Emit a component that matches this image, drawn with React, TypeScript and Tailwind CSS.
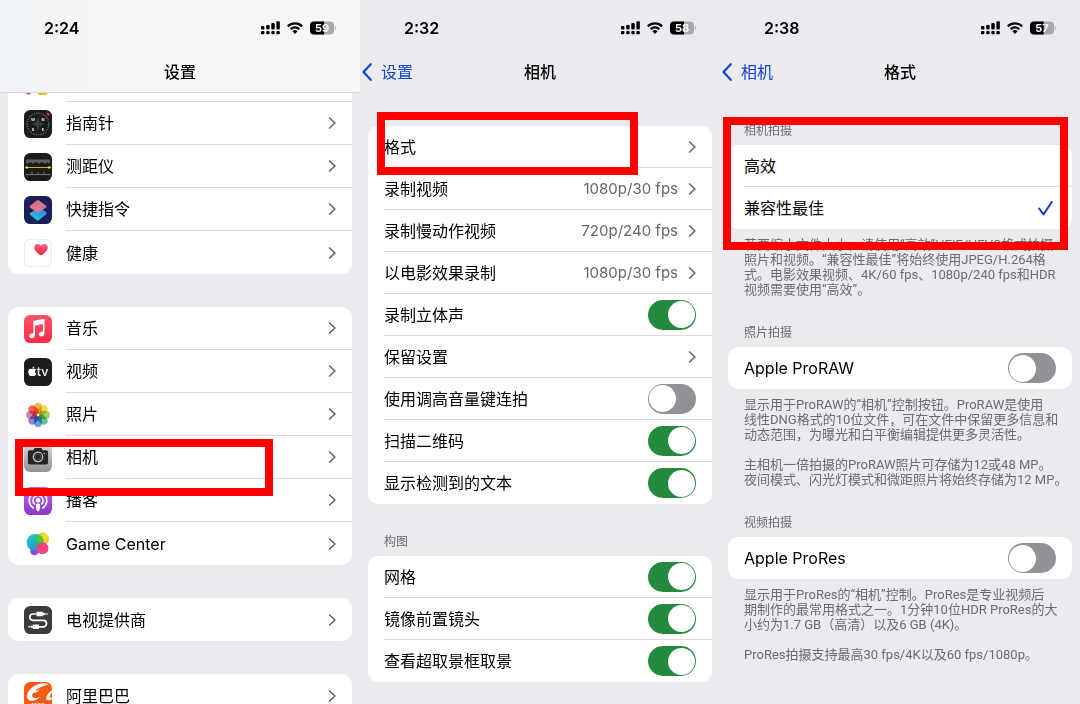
import { useId, useState } from 'react'
import type { ReactNode } from 'react'
import { FaApple } from 'react-icons/fa'

function StatusBar({ time, battery }: { time: string; battery: number }) {
  const level = 24 * (battery / 100)
  return (
    <div className="flex h-[55px] items-center justify-between pl-11 pr-6">
      <span className="leading-5 font-semibold">{time}</span>
      <div className="flex items-center gap-[7px]">
        <svg width="19" height="14" viewBox="0 0 19 14" aria-label="信号">
          <rect x="0" y="5" width="3.4" height="3.6" rx="1" />
          <rect x="5.2" y="4" width="3.4" height="4.6" rx="1" />
          <rect x="10.3" y="2" width="3.4" height="6.6" rx="1" />
          <rect x="15.4" y="0.3" width="3.4" height="8.3" rx="1" />
          <rect x="0" y="10" width="3.4" height="3.2" rx="1" />
          <rect x="5.2" y="10" width="3.4" height="3.2" rx="1" />
          <rect x="10.3" y="10" width="3.4" height="3.2" rx="1" />
          <rect x="15.4" y="10" width="3.4" height="3.2" rx="1" />
        </svg>
        <svg width="16" height="12" viewBox="0 0 16 12" aria-label="Wi-Fi">
          <g fill="none" stroke="currentColor" strokeWidth="2.2">
            <path d="M.8 4.400a10.200 10.200 0 0 1 14.400 0" />
            <path d="M3.600 7.300a6.200 6.200 0 0 1 8.800 0" />
          </g>
          <path d="M8 12 5.400 9.300a3.700 3.700 0 0 1 5.200 0z" />
        </svg>
        <svg width="26" height="14" viewBox="0 0 26 14" aria-label={`电量 ${battery}%`}>
          <defs>
            <clipPath id={`battery-${battery}`}>
              <rect x="0" y="0.5" width="24" height="13" rx="4" />
            </clipPath>
          </defs>
          <g clipPath={`url(#battery-${battery})`}>
            <rect width="24" height="14" fill="#a9a9ad" />
            <rect width={level} height="14" />
          </g>
          <path d="M24.800 5v4.200c.8-.3 1.100-1.100 1.100-2.100s-.3-1.800-1.100-2.100z" fill="#a9a9ad" />
          <text x="12" y="11" textAnchor="middle" fontSize="11" fontWeight="700" fill="#fff">
            {battery}
          </text>
        </svg>
      </div>
    </div>
  )
}

function NavBar({ title, back }: { title: string; back?: string }) {
  return (
    <div className="grid h-[34px] grid-cols-[1fr_auto_1fr] items-center">
      {back ? (
        <a href="#back" className="flex items-center gap-[9px] pl-0.5 text-[#1545d2]">
          <svg width="10" height="18" viewBox="0 0 10 18" aria-hidden="true">
            <path
              d="M8.800 1.200 1.500 9l7.300 7.800"
              fill="none"
              stroke="currentColor"
              strokeWidth="2.200"
              strokeLinecap="round"
              strokeLinejoin="round"
            />
          </svg>
          <span>{back}</span>
        </a>
      ) : (
        <span />
      )}
      <h1 className="font-medium">{title}</h1>
      <span />
    </div>
  )
}

function Chevron() {
  return (
    <svg width="8" height="12" viewBox="0 0 8 12" className="shrink-0 text-[#67676c]" aria-hidden="true">
      <path
        d="M1.600 1 6.900 6 1.600 11"
        fill="none"
        stroke="currentColor"
        strokeWidth="1.700"
        strokeLinecap="round"
        strokeLinejoin="round"
      />
    </svg>
  )
}

const Highlight = ({ className }: { className: string }) => (
  <div className={`pointer-events-none absolute z-10 border-8 border-[#fe0000] ${className}`} />
)

const Card = ({ children }: { children: ReactNode }) => (
  <ul className="rounded-[10px] bg-white">{children}</ul>
)

interface AppRowProps {
  icon: ReactNode
  label: string
  last?: boolean
  marked?: boolean
}

function AppRow({ icon, label, last, marked }: AppRowProps) {
  return (
    <li className="relative">
      <button type="button" className="flex h-[43px] w-full items-center gap-[14px] pl-4 text-left">
        {icon}
        <span
          className={`flex h-full flex-1 items-center justify-between pr-4 ${last ? '' : 'border-b border-[#dedee1]'}`}
        >
          {label}
          <Chevron />
        </span>
      </button>
      {marked && <Highlight className="top-[3px] left-[7px] h-[57px] w-[258px]" />}
    </li>
  )
}

function IconTile({ fill, children }: { fill: string; children: ReactNode }) {
  return (
    <svg width="28" height="28" viewBox="0 0 28 28" className="shrink-0" aria-hidden="true">
      <rect width="28" height="28" rx="6.300" fill={fill} />
      {children}
    </svg>
  )
}

const CompassIcon = () => (
  <IconTile fill="#1b1b1d">
    <circle cx="14" cy="14" r="10.800" fill="none" stroke="#9b9b9d" strokeWidth="1.600" strokeDasharray=".5 1.300" />
    <path d="M14 8.500v11M8.500 14h11" stroke="#777" strokeWidth=".6" />
    <circle cx="14" cy="14" r="2.800" fill="none" stroke="#555" strokeWidth=".6" />
    <path d="m22 2.800 3.400.3-1 3.300z" fill="#f33b30" />
    <g fill="#e8e8e8" fontSize="4" fontWeight="700" textAnchor="middle">
      <text x="9" y="10.500">W</text>
      <text x="19" y="10.500">N</text>
      <text x="9" y="21">S</text>
      <text x="19" y="21">E</text>
    </g>
  </IconTile>
)

const MeasureIcon = () => (
  <IconTile fill="#1b1b1d">
    <path
      d="M3 6.500v4M5 6.500v3M7 6.500v3M9 6.500v4M11 6.500v3M13 6.500v3M15 6.500v4M17 6.500v3M19 6.500v3M21 6.500v4M23 6.500v3M25 6.500v3.500"
      stroke="#c8c8c8"
      strokeWidth=".8"
    />
    <path d="M1 14.500h26" stroke="#d7b02c" strokeWidth="1" />
    <circle cx="2.800" cy="14.500" r="1.300" fill="#f7cf3b" />
    <circle cx="25.200" cy="14.500" r="1.300" fill="#f7cf3b" />
    <path d="M8 21v-2.500M14 21v-2M20 21v-2.500M1.500 21.600h25" stroke="#a0a0a0" strokeWidth=".7" />
  </IconTile>
)

const ShortcutsIcon = () => (
  <IconTile fill="#1a2057">
    <defs>
      <linearGradient id="sc-low" x1="0" y1="1" x2="1" y2="0">
        <stop offset="0" stopColor="#22d3d5" />
        <stop offset="1" stopColor="#2d72f0" />
      </linearGradient>
      <linearGradient id="sc-top" x1="0" y1="0" x2="1" y2="1">
        <stop offset="0" stopColor="#f7657b" />
        <stop offset=".5" stopColor="#e97d8e" />
        <stop offset="1" stopColor="#a57bd2" />
      </linearGradient>
    </defs>
    <path
      d="m15 11.300 7 4.800c1 .7 1 1.600 0 2.300l-7 5.500c-.9.700-1.600.7-2.500 0l-6-4.800c-1-.8-1-1.600 0-2.300z"
      fill="url(#sc-low)"
    />
    <path
      d="M12.700 4.400c.9-.7 1.600-.7 2.500 0l6.600 5c1 .8 1 1.600 0 2.400l-6.600 4.700c-.9.700-1.600.7-2.500 0l-6.400-4.700c-1-.8-1-1.600 0-2.400z"
      fill="url(#sc-top)"
      opacity=".93"
    />
  </IconTile>
)

const HealthIcon = () => (
  <IconTile fill="#e0e0e2">
    <defs>
      <linearGradient id="health" x1="0" y1="0" x2="0" y2="1">
        <stop offset="0" stopColor="#fb5c87" />
        <stop offset="1" stopColor="#f9243f" />
      </linearGradient>
    </defs>
    <rect x=".6" y=".6" width="26.800" height="26.800" rx="5.800" fill="#fff" />
    <path
      d="M17 16.600c-3.500-2.300-6.800-5-6.800-8.100 0-2 1.500-3.600 3.400-3.600 1.500 0 2.700.8 3.400 2.100.7-1.300 1.900-2.100 3.400-2.100 1.900 0 3.400 1.600 3.400 3.600 0 3.100-3.300 5.800-6.800 8.100z"
      fill="url(#health)"
    />
  </IconTile>
)

const MusicIcon = () => (
  <IconTile fill="url(#music)">
    <defs>
      <linearGradient id="music" x1="0" y1="0" x2="0" y2="1">
        <stop offset="0" stopColor="#fb5468" />
        <stop offset="1" stopColor="#f82d46" />
      </linearGradient>
    </defs>
    <path
      d="M20.500 4.700v13.200c0 2.200-1.300 3.400-3.200 3.400-1.400 0-2.500-.8-2.500-2.100 0-1.500 1.200-2.200 2.700-2.500 1-.2 1.400-.4 1.400-1.300V9.100l-7.900 1.700v9c0 2.200-1.300 3.400-3.200 3.400-1.400 0-2.500-.8-2.500-2.100 0-1.500 1.200-2.200 2.700-2.500 1-.2 1.400-.4 1.400-1.300V6.800c0-.6.300-.9.900-1.100l9.300-2c.6-.1.900.2.900 1z"
      fill="#fff"
    />
  </IconTile>
)

const TvIcon = () => (
  <IconTile fill="#1d1d1f">
    <FaApple x="2.800" y="7.800" size="11" color="#fff" />
    <text x="12.800" y="18" fontSize="12.500" fontWeight="500" fill="#fff">
      tv
    </text>
  </IconTile>
)

const petals = ['#f9a533', '#ecd23b', '#9bcb56', '#52b98d', '#5196dd', '#8a70c6', '#d273a9', '#ef5148']

const PhotosIcon = () => (
  <IconTile fill="#fff">
    {petals.map((color, i) => (
      <rect
        key={color}
        x="10.100"
        y="2.100"
        width="7.800"
        height="10.800"
        rx="3.900"
        fill={color}
        opacity=".9"
        className="mix-blend-multiply"
        transform={`rotate(${i * 45} 14 14)`}
      />
    ))}
  </IconTile>
)

const CameraIcon = () => (
  <IconTile fill="url(#camera)">
    <defs>
      <linearGradient id="camera" x1="0" y1="0" x2="0" y2="1">
        <stop offset="0" stopColor="#d8d8da" />
        <stop offset="1" stopColor="#919196" />
      </linearGradient>
    </defs>
    <path
      d="M9.800 5.300c.4-.8.900-1.200 1.800-1.200h4.800c.9 0 1.400.4 1.800 1.200l.5.900h3.400c1.200 0 2 .8 2 2v10.200c0 1.200-.8 2-2 2H5.900c-1.200 0-2-.8-2-2V8.200c0-1.200.8-2 2-2h3.400z"
      fill="#252528"
    />
    <circle cx="14" cy="12.900" r="4.700" fill="none" stroke="#c9c9cb" strokeWidth="1.200" />
    <circle cx="14" cy="12.900" r="2.900" fill="none" stroke="#66666a" strokeWidth=".6" />
    <circle cx="20.300" cy="9.500" r=".8" fill="#e7b735" />
  </IconTile>
)

const PodcastIcon = () => (
  <IconTile fill="url(#podcast)">
    <defs>
      <linearGradient id="podcast" x1="0" y1="0" x2="0" y2="1">
        <stop offset="0" stopColor="#c664e8" />
        <stop offset="1" stopColor="#8836c9" />
      </linearGradient>
    </defs>
    <g fill="none" stroke="#fff" strokeWidth="1.600" strokeLinecap="round">
      <path d="M9.300 21a8.800 8.800 0 1 1 9.400 0" />
      <path d="M10.300 17a5 5 0 1 1 7.400 0" />
    </g>
    <circle cx="14" cy="13.300" r="2.300" fill="#fff" />
    <path
      d="M11.800 18.400c0-1.200.8-1.800 2.200-1.800s2.200.6 2.200 1.800c0 1.500-.4 3.400-.7 4.600-.2.800-.7 1.200-1.500 1.200s-1.300-.4-1.500-1.200c-.3-1.200-.7-3.100-.7-4.600z"
      fill="#fff"
    />
  </IconTile>
)

const GameCenterIcon = () => (
  <IconTile fill="#fff">
    <defs>
      <linearGradient id="gc-main" x1="0" y1="0" x2="1" y2="1">
        <stop offset="0" stopColor="#2cc7ee" />
        <stop offset=".5" stopColor="#20b5a8" />
        <stop offset="1" stopColor="#39be5b" />
      </linearGradient>
      <linearGradient id="gc-blue" x1="0" y1="0" x2="0" y2="1">
        <stop offset=".3" stopColor="#23a8ef" stopOpacity="0" />
        <stop offset="1" stopColor="#297ef4" />
      </linearGradient>
      <linearGradient id="gc-yellow" x1="0" y1="0" x2="1" y2="1">
        <stop offset="0" stopColor="#8bd637" />
        <stop offset=".5" stopColor="#f9df26" />
        <stop offset="1" stopColor="#fcae2b" />
      </linearGradient>
    </defs>
    <circle cx="10.500" cy="21" r="4.300" fill="#8a43ee" />
    <circle cx="18.800" cy="8.800" r="6.200" fill="url(#gc-yellow)" />
    <circle cx="11.300" cy="12.300" r="8.600" fill="url(#gc-main)" />
    <circle cx="11.300" cy="12.300" r="8.600" fill="url(#gc-blue)" opacity=".7" />
    <path d="M13.500 4.300a8.600 8.600 0 0 1 6.200 10A6.200 6.200 0 0 1 13.500 4.300z" fill="#4cc63b" />
    <circle cx="18.500" cy="18.300" r="6" fill="#fb3a78" opacity=".95" />
  </IconTile>
)

const ProviderIcon = () => (
  <IconTile fill="#3b3b3d">
    <path
      d="M12.500 8H9a3.200 3.200 0 0 0 0 6.400h10.300a3.200 3.200 0 0 1 0 6.400H15"
      fill="none"
      stroke="#fff"
      strokeWidth="1.700"
    />
    <path d="M12.500 5.700h6.300v4.600h-6.300zM8.700 18.500h6.300v4.600H8.700z" fill="#fff" />
    <path d="M18.800 6.700h2v2.600h-2zM6.700 19.500h2v2.600h-2z" fill="#fff" />
    <path d="M20.800 8h3.200M4 20.800h2.700" stroke="#fff" strokeWidth="1.100" />
  </IconTile>
)

const AlibabaIcon = () => (
  <IconTile fill="#f95a12">
    <path
      d="M17 1.500C9.500 2.500 2.400 9.500 3 15c.5 4.300 5.200 4.900 11 1.700l2.500-1.800c-3.800 1.600-7.600 1.700-8.200-.6-.3-1.200.2-2.400 1-3.500 2.700.3 5.300-1.200 6-3.300-1.400 1-2.900 1.400-4.200 1.400 2.500-3 7-4.900 13.500-6.700-2.300-.9-5.100-1-7.600-.7z"
      fill="#fff"
    />
    <path d="M28 8.300c-3.100 2-5.900 5.600-5.900 8 0 2.100 2.300 2.500 5.900 1.300v-2.100c-1.300.5-2.300.5-2.300-.5 0-1.200 1-3.100 2.300-4.400z" fill="#fff" />
    <text x="14" y="25.500" textAnchor="middle" fontSize="5.500" fontWeight="800" fill="#fff">
      1688
    </text>
  </IconTile>
)

function SettingsScreen() {
  return (
    <section>
      <header className="border-b border-[#d6d6da] bg-linear-to-r from-[#eff3f5] via-[#f6f6f7] via-25% to-[#f6f6f7] pb-[3px]">
        <StatusBar time="2:24" battery={59} />
        <NavBar title="设置" />
      </header>
      <div className="flex flex-col gap-[33px] px-2">
        <ul className="rounded-b-[10px] bg-white">
          <li className="flex h-[9px] items-start gap-[14px] overflow-hidden pl-4">
            <svg width="28" height="2" viewBox="0 0 28 2" aria-hidden="true">
              <path d="M2 0h5l-1 1.500H3z" fill="#b758a8" />
              <path d="M13 0h11l-2 2h-7z" fill="#f4c02c" />
            </svg>
            <span className="h-full flex-1 border-b border-[#dedee1]" />
          </li>
          <AppRow icon={<CompassIcon />} label="指南针" />
          <AppRow icon={<MeasureIcon />} label="测距仪" />
          <AppRow icon={<ShortcutsIcon />} label="快捷指令" />
          <AppRow icon={<HealthIcon />} label="健康" last />
        </ul>
        <Card>
          <AppRow icon={<MusicIcon />} label="音乐" />
          <AppRow icon={<TvIcon />} label="视频" />
          <AppRow icon={<PhotosIcon />} label="照片" />
          <AppRow icon={<CameraIcon />} label="相机" marked />
          <AppRow icon={<PodcastIcon />} label="播客" />
          <AppRow icon={<GameCenterIcon />} label="Game Center" last />
        </Card>
        <Card>
          <AppRow icon={<ProviderIcon />} label="电视提供商" last />
        </Card>
        <Card>
          <AppRow icon={<AlibabaIcon />} label="阿里巴巴" last />
        </Card>
      </div>
    </section>
  )
}

interface RowProps {
  label: string
  last?: boolean
  marked?: boolean
}

const rowClass = (last?: boolean) =>
  `flex h-[42px] items-center pr-4 ${last ? '' : 'border-b border-[#dedee1]'}`

function LinkRow({ label, value, last, marked }: RowProps & { value?: string }) {
  return (
    <li className="relative pl-4">
      <button type="button" className={`w-full gap-[10px] text-left ${rowClass(last)}`}>
        <span className="flex-1">{label}</span>
        {value && <span className="text-[15px] text-[#66666b]">{value}</span>}
        <Chevron />
      </button>
      {marked && <Highlight className="-top-[14px] left-[9px] h-[63px] w-[261px]" />}
    </li>
  )
}

function ToggleRow({ label, last, on = false }: RowProps & { on?: boolean }) {
  const id = useId()
  const [checked, setChecked] = useState(on)
  return (
    <li className="pl-4">
      <div className={rowClass(last)}>
        <label htmlFor={id} className="flex-1">
          {label}
        </label>
        <input
          id={id}
          type="checkbox"
          role="switch"
          checked={checked}
          onChange={(e) => setChecked(e.target.checked)}
          className="flex h-[30px] w-12 shrink-0 appearance-none items-center rounded-full bg-[#919198] px-px before:size-[27px] before:rounded-full before:bg-white checked:justify-end checked:bg-[#248a3d]"
        />
      </div>
    </li>
  )
}

const SectionLabel = ({ children }: { children: string }) => (
  <h2 className="px-4 pt-7 pb-1.5 text-[12px] leading-4 text-[#6b6b70]">{children}</h2>
)

function Footnote({ paragraphs }: { paragraphs: string[][] }) {
  return (
    <div className="flex flex-col gap-[15px] pt-2 pl-4 font-[Roboto,'Noto_Sans_CJK_SC',sans-serif] text-[13px] leading-[15px] whitespace-nowrap text-[#6b6b70]">
      {paragraphs.map((lines) => (
        <p key={lines[0]}>
          {lines.map((line) => (
            <span key={line} className="block">
              {line}
            </span>
          ))}
        </p>
      ))}
    </div>
  )
}

function CameraScreen() {
  return (
    <section>
      <header className="pb-1">
        <StatusBar time="2:32" battery={58} />
        <NavBar title="相机" back="设置" />
      </header>
      <div className="px-2 pt-[33px]">
        <Card>
          <LinkRow label="格式" marked />
          <LinkRow label="录制视频" value="1080p/30 fps" />
          <LinkRow label="录制慢动作视频" value="720p/240 fps" />
          <LinkRow label="以电影效果录制" value="1080p/30 fps" />
          <ToggleRow label="录制立体声" on />
          <LinkRow label="保留设置" />
          <ToggleRow label="使用调高音量键连拍" />
          <ToggleRow label="扫描二维码" on />
          <ToggleRow label="显示检测到的文本" on last />
        </Card>
        <div className="pt-0.5">
          <SectionLabel>构图</SectionLabel>
          <Card>
            <ToggleRow label="网格" on />
            <ToggleRow label="镜像前置镜头" on />
            <ToggleRow label="查看超取景框取景" on last />
          </Card>
        </div>
      </div>
    </section>
  )
}

const formats = ['高效', '兼容性最佳']

function FormatScreen() {
  const [format, setFormat] = useState('兼容性最佳')
  return (
    <section>
      <header className="pb-1">
        <StatusBar time="2:38" battery={57} />
        <NavBar title="格式" back="相机" />
      </header>
      <div className="px-2 pt-0.5">
        <SectionLabel>相机拍摄</SectionLabel>
        <div className="relative">
          <Card>
            {formats.map((name, i) => (
              <li key={name} className="pl-4">
                <label className={rowClass(i === formats.length - 1)}>
                  <input
                    type="radio"
                    name="format"
                    className="sr-only"
                    checked={format === name}
                    onChange={() => setFormat(name)}
                  />
                  <span className="flex-1">{name}</span>
                  {format === name && (
                    <svg width="18" height="16" viewBox="0 0 18 16" className="text-[#1038cc]" aria-hidden="true">
                      <path
                        d="M1.200 8.500 5.500 14.500 13.700 2"
                        fill="none"
                        stroke="currentColor"
                        strokeWidth="2"
                        strokeLinecap="round"
                        strokeLinejoin="round"
                      />
                    </svg>
                  )}
                </label>
              </li>
            ))}
          </Card>
          <Highlight className="-top-7 right-1 -left-[5px] h-[133px]" />
        </div>
        <Footnote
          paragraphs={[
            [
              '若要缩小文件大小，请使用“高效”HEIF/HEVC格式拍摄',
              '照片和视频。“兼容性最佳”将始终使用JPEG/H.264格',
              '式。电影效果视频、4K/60 fps、1080p/240 fps和HDR',
              '视频需要使用“高效”。',
            ],
          ]}
        />
        <SectionLabel>照片拍摄</SectionLabel>
        <Card>
          <ToggleRow label="Apple ProRAW" last />
        </Card>
        <Footnote
          paragraphs={[
            [
              '显示用于ProRAW的“相机”控制按钮。ProRAW是使用',
              '线性DNG格式的10位文件，可在文件中保留更多信息和',
              '动态范围，为曝光和白平衡编辑提供更多灵活性。',
            ],
            [
              '主相机一倍拍摄的ProRAW照片可存储为12或48 MP。',
              '夜间模式、闪光灯模式和微距照片将始终存储为12 MP。',
            ],
          ]}
        />
        <SectionLabel>视频拍摄</SectionLabel>
        <Card>
          <ToggleRow label="Apple ProRes" last />
        </Card>
        <Footnote
          paragraphs={[
            [
              '显示用于ProRes的“相机”控制。ProRes是专业视频后',
              '期制作的最常用格式之一。1分钟10位HDR ProRes的大',
              '小约为1.7 GB（高清）以及6 GB (4K)。',
            ],
            ['ProRes拍摄支持最高30 fps/4K以及60 fps/1080p。'],
          ]}
        />
      </div>
    </section>
  )
}

export default function App() {
  return (
    <main
      lang="zh-CN"
      className="grid h-screen grid-cols-3 overflow-hidden bg-[#eaeaef] font-[Inter,'Noto_Sans_CJK_SC',sans-serif] text-[16px] leading-5 text-black"
    >
      <SettingsScreen />
      <CameraScreen />
      <FormatScreen />
    </main>
  )
}
